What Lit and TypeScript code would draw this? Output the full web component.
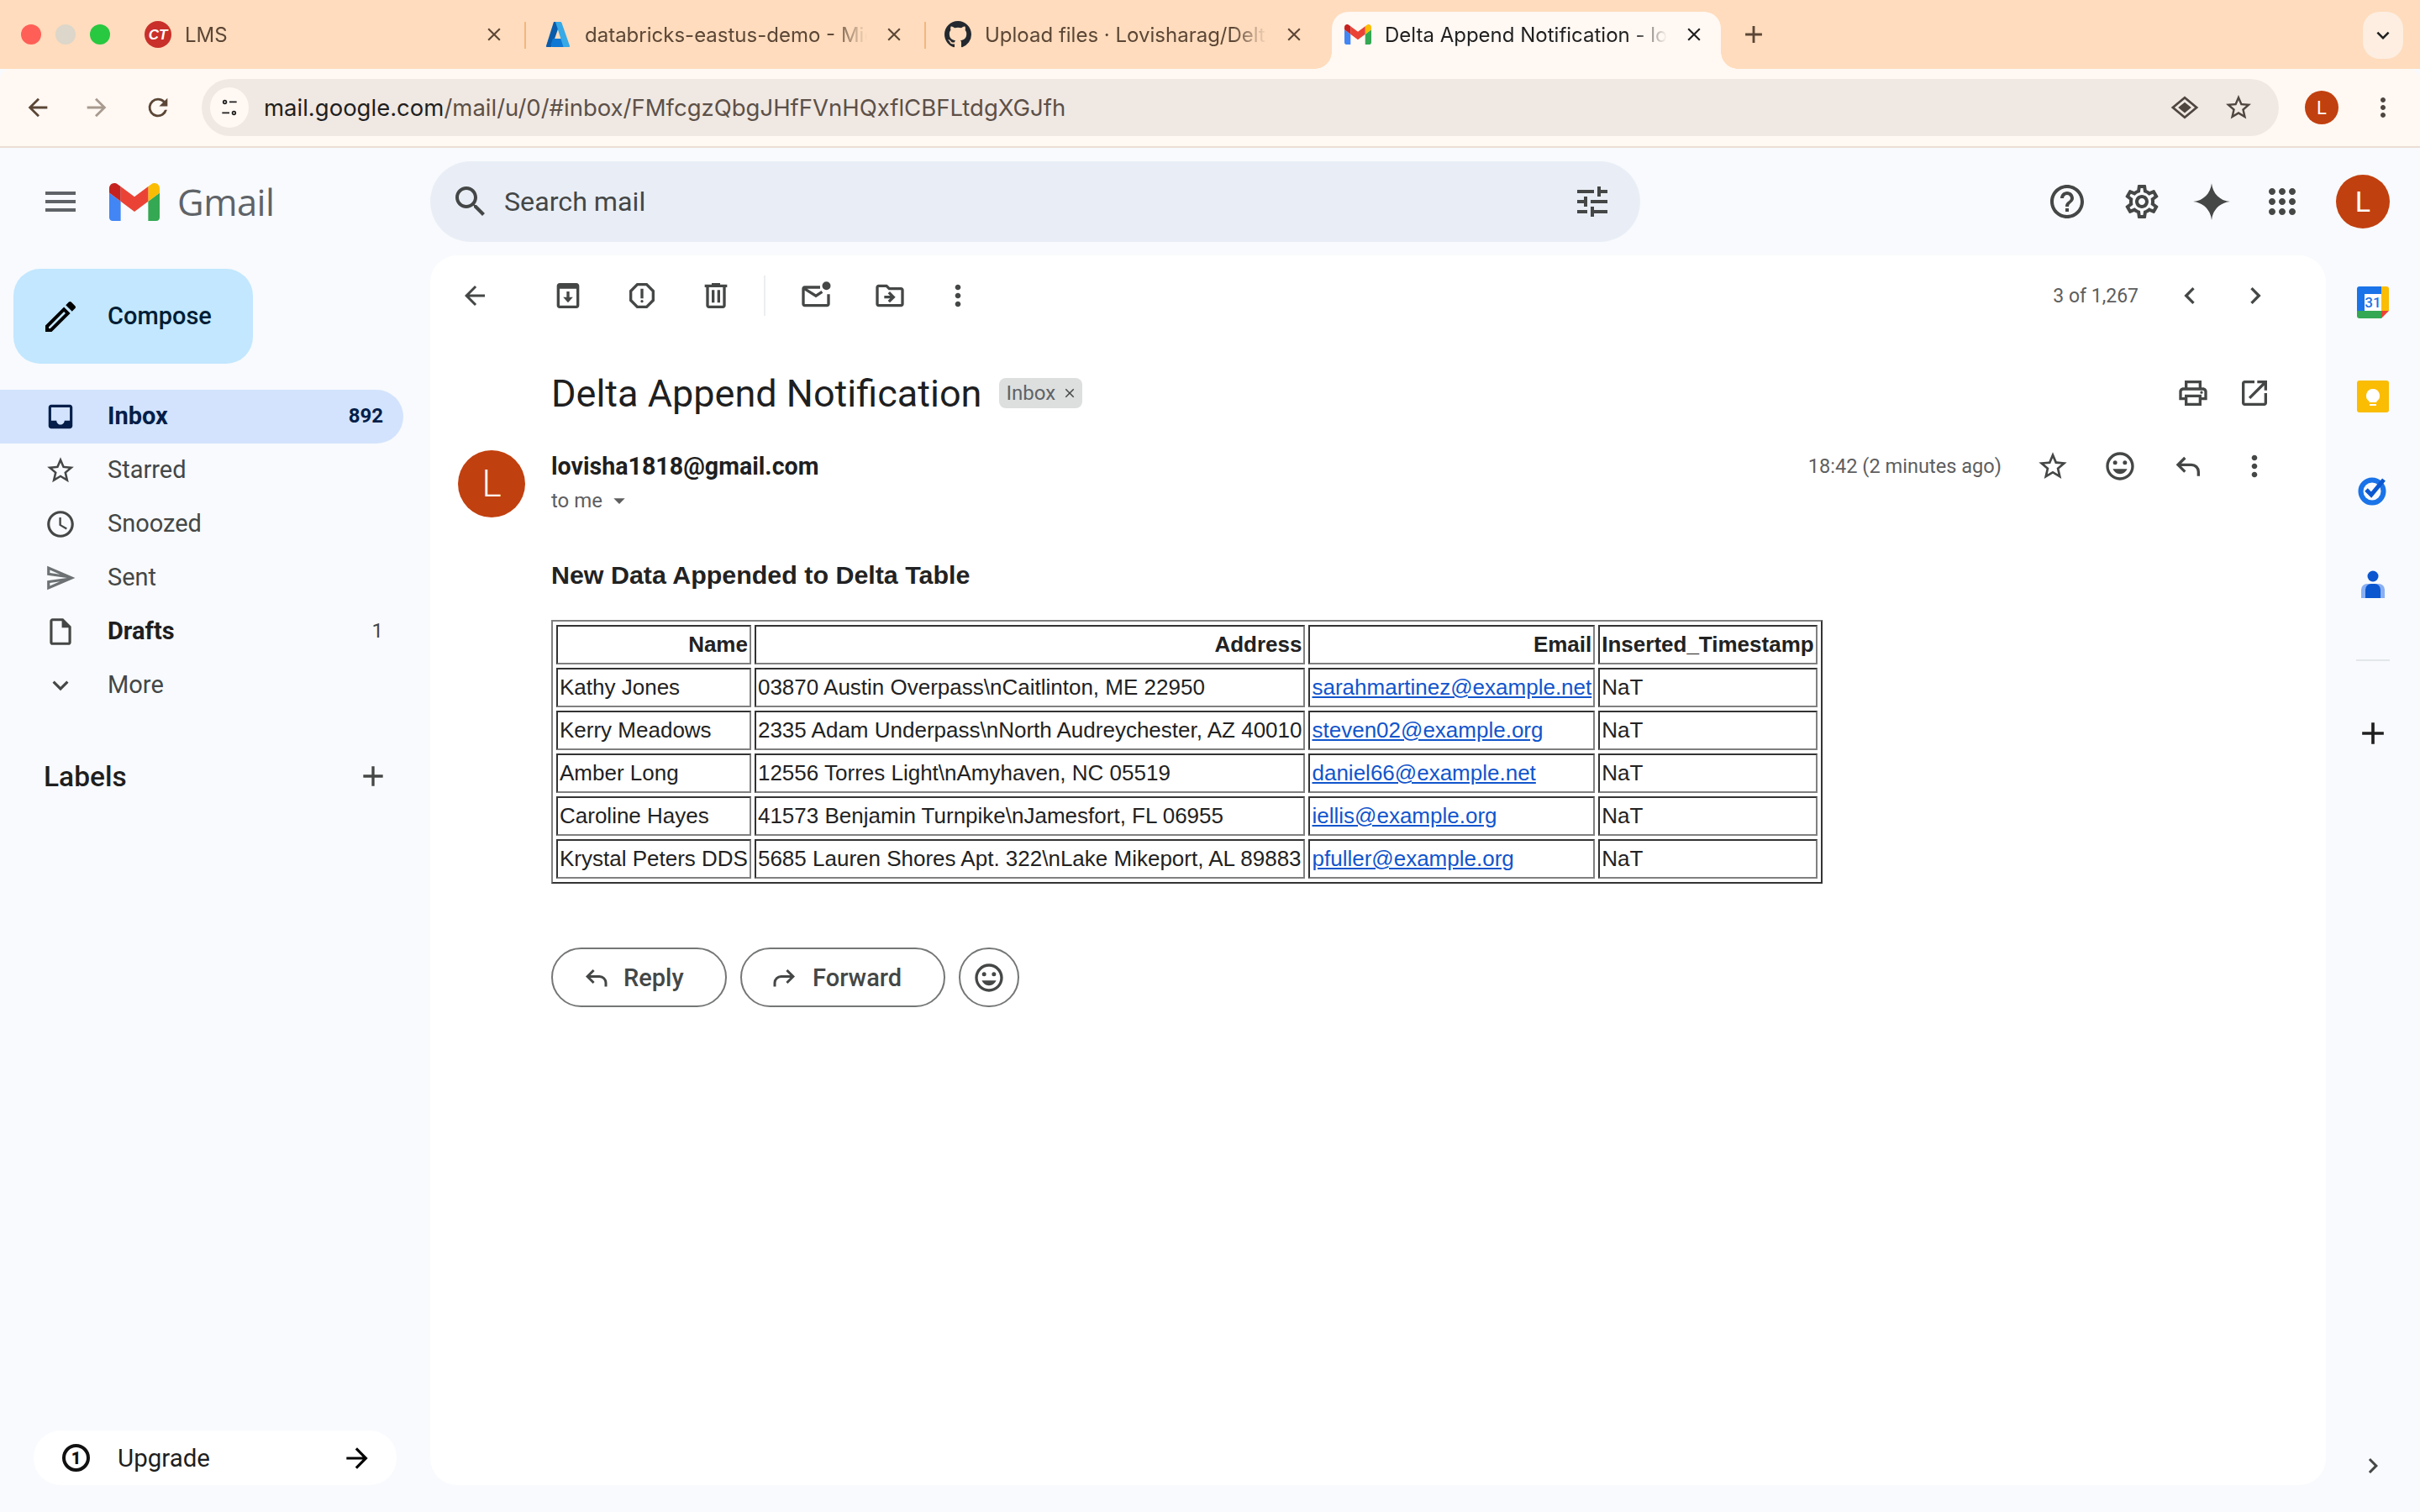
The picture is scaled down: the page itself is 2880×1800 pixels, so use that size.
import { LitElement, html, css, svg } from 'lit';
import { customElement } from 'lit/decorators.js';

const P: Record<string, string> = {
  back: 'M20 11H7.83l5.59-5.59L12 4l-8 8 8 8 1.41-1.41L7.83 13H20v-2z',
  forward: 'M12 4l-1.41 1.41L16.17 11H4v2h12.17l-5.58 5.59L12 20l8-8z',
  reload: 'M17.65 6.35A7.95 7.95 0 0 0 12 4a8 8 0 1 0 7.73 10h-2.08A6 6 0 1 1 12 6c1.66 0 3.14.69 4.22 1.78L13 11h7V4l-2.35 2.35z',
  menu: 'M3 18h18v-2H3v2zm0-5h18v-2H3v2zm0-7v2h18V6H3z',
  search: 'M15.5 14h-.79l-.28-.27C15.41 12.59 16 11.11 16 9.5 16 5.91 13.09 3 9.5 3S3 5.91 3 9.5 5.91 16 9.5 16c1.61 0 3.09-.59 4.23-1.57l.27.28v.79l5 4.99L20.49 19l-4.99-5zm-6 0C7.01 14 5 11.99 5 9.5S7.01 5 9.5 5 14 7.01 14 9.5 11.99 14 9.5 14z',
  tune: 'M3 17v2h6v-2H3zM3 5v2h10V5H3zm10 16v-2h8v-2h-8v-2h-2v6h2zM7 9v2H3v2h4v2h2V9H7zm14 4v-2H11v2h10zm-6-4h2V7h4V5h-4V3h-2v6z',
  help: 'M11 18h2v-2h-2v2zm1-16C6.48 2 2 6.48 2 12s4.48 10 10 10 10-4.48 10-10S17.52 2 12 2zm0 18c-4.41 0-8-3.59-8-8s3.59-8 8-8 8 3.59 8 8-3.59 8-8 8zm0-14c-2.21 0-4 1.79-4 4h2c0-1.1.9-2 2-2s2 .9 2 2c0 2-3 1.75-3 5h2c0-2.25 3-2.5 3-5 0-2.21-1.79-4-4-4z',
  settings: 'M19.43 12.98c.04-.32.07-.64.07-.98 0-.34-.03-.66-.07-.98l2.11-1.65c.19-.15.24-.42.12-.64l-2-3.46c-.09-.16-.26-.25-.44-.25-.06 0-.12.01-.17.03l-2.49 1c-.52-.4-1.08-.73-1.69-.98l-.38-2.65C14.46 2.18 14.25 2 14 2h-4c-.25 0-.46.18-.49.42l-.38 2.65c-.61.25-1.17.59-1.69.98l-2.49-1c-.06-.02-.12-.03-.18-.03-.17 0-.34.09-.43.25l-2 3.46c-.13.22-.07.49.12.64l2.11 1.65c-.04.32-.07.65-.07.98 0 .33.03.66.07.98l-2.11 1.65c-.19.15-.24.42-.12.64l2 3.46c.09.16.26.25.44.25.06 0 .12-.01.17-.03l2.49-1c.52.4 1.08.73 1.69.98l.38 2.65c.03.24.24.42.49.42h4c.25 0 .46-.18.49-.42l.38-2.65c.61-.25 1.17-.59 1.69-.98l2.49 1c.06.02.12.03.18.03.17 0 .34-.09.43-.25l2-3.46c.12-.22.07-.49-.12-.64l-2.11-1.65zm-1.98-1.71c.04.31.05.52.05.73 0 .21-.02.43-.05.73l-.14 1.13.89.7 1.08.84-.7 1.21-1.27-.51-1.04-.42-.9.68c-.43.32-.84.56-1.25.73l-1.06.43-.16 1.13-.2 1.35h-1.4l-.19-1.35-.16-1.13-1.06-.43c-.43-.18-.83-.41-1.23-.71l-.91-.7-1.06.43-1.27.51-.7-1.21 1.08-.84.89-.7-.14-1.13c-.03-.31-.05-.54-.05-.74s.02-.43.05-.73l.14-1.13-.89-.7-1.08-.84.7-1.21 1.27.51 1.04.42.9-.68c.43-.32.84-.56 1.25-.73l1.06-.43.16-1.13.2-1.35h1.39l.19 1.35.16 1.13 1.06.43c.43.18.83.41 1.23.71l.91.7 1.06-.43 1.27-.51.7 1.21-1.07.85-.89.7.14 1.13zM12 8c-2.21 0-4 1.79-4 4s1.79 4 4 4 4-1.79 4-4-1.79-4-4-4zm0 6c-1.1 0-2-.9-2-2s.9-2 2-2 2 .9 2 2-.9 2-2 2z',
  spark: 'M12 1.5C12.6 7.3 16.7 11.4 22.5 12 16.7 12.6 12.6 16.7 12 22.5 11.4 16.7 7.3 12.6 1.5 12 7.3 11.4 11.4 7.3 12 1.5z',
  apps: 'M6 8c1.1 0 2-.9 2-2s-.9-2-2-2-2 .9-2 2 .9 2 2 2zM12 20c1.1 0 2-.9 2-2s-.9-2-2-2-2 .9-2 2 .9 2 2 2zM6 20c1.1 0 2-.9 2-2s-.9-2-2-2-2 .9-2 2 .9 2 2 2zM6 14c1.1 0 2-.9 2-2s-.9-2-2-2-2 .9-2 2 .9 2 2 2zM12 14c1.1 0 2-.9 2-2s-.9-2-2-2-2 .9-2 2 .9 2 2 2zM16 6c0 1.1.9 2 2 2s2-.9 2-2-.9-2-2-2-2 .9-2 2zM12 8c1.1 0 2-.9 2-2s-.9-2-2-2-2 .9-2 2 .9 2 2 2zM18 14c1.1 0 2-.9 2-2s-.9-2-2-2-2 .9-2 2 .9 2 2 2zM18 20c1.1 0 2-.9 2-2s-.9-2-2-2-2 .9-2 2 .9 2 2 2z',
  star: 'M22 9.24l-7.19-.62L12 2 9.19 8.63 2 9.24l5.46 4.73L5.82 21 12 17.27 18.18 21l-1.63-7.03L22 9.24zM12 15.4l-3.76 2.27 1-4.28-3.32-2.88 4.38-.38L12 6.1l1.71 4.04 4.38.38-3.32 2.88 1 4.28L12 15.4z',
  clock: 'M11.99 2C6.47 2 2 6.48 2 12s4.47 10 9.99 10C17.52 22 22 17.52 22 12S17.52 2 11.99 2zM12 20c-4.42 0-8-3.58-8-8s3.58-8 8-8 8 3.58 8 8-3.58 8-8 8zm.5-13H11v6l5.25 3.15.75-1.23-4.5-2.67z',
  sent: 'M4.01 6.03l7.51 3.22-7.52-1 .01-2.22m7.5 8.72L4 17.97v-2.22l7.51-1M2.01 3L2 10l15 2-15 2 .01 7L23 12 2.01 3z',
  draft: 'M14 2H6c-1.1 0-1.99.9-1.99 2L4 20c0 1.1.89 2 1.99 2H18c1.1 0 2-.9 2-2V8l-6-6zM6 20V4h7v5h5v11H6z',
  expand: 'M16.59 8.59L12 13.17 7.41 8.59 6 10l6 6 6-6z',
  add: 'M19 13h-6v6h-2v-6H5v-2h6V5h2v6h6v2z',
  inbox: 'M19 3H5c-1.1 0-2 .9-2 2v14c0 1.1.9 2 2 2h14c1.1 0 2-.9 2-2V5c0-1.1-.9-2-2-2zm0 12h-4c0 1.66-1.35 3-3 3s-3-1.34-3-3H5V5h14v10z',
  edit: 'M3 17.25V21h3.75L17.81 9.94l-3.75-3.75L3 17.25zM5.92 19H5v-.92l9.06-9.06.92.92L5.92 19zM20.71 5.63l-2.34-2.34c-.39-.39-1.02-.39-1.41 0l-1.83 1.83 3.75 3.75 1.83-1.83c.39-.39.39-1.02 0-1.41z',
  more: 'M12 8c1.1 0 2-.9 2-2s-.9-2-2-2-2 .9-2 2 .9 2 2 2zm0 2c-1.1 0-2 .9-2 2s.9 2 2 2 2-.9 2-2-.9-2-2-2zm0 6c-1.1 0-2 .9-2 2s.9 2 2 2 2-.9 2-2-.9-2-2-2z',
  archive: 'M18 3H6c-1.1 0-2 .9-2 2v14c0 1.1.9 2 2 2h12c1.1 0 2-.9 2-2V5c0-1.1-.9-2-2-2zm0 16H6V7h12v12zM13 9h-2v4H8.5l3.5 4 3.5-4H13z',
  report: 'M15.73 3H8.27L3 8.27v7.46L8.27 21h7.46L21 15.73V8.27L15.73 3zM19 14.9L14.9 19H9.1L5 14.9V9.1L9.1 5h5.8L19 9.1v5.8zM12 17a1 1 0 1 0 0-2 1 1 0 0 0 0 2zM11 7h2v7h-2z',
  trash: 'M15 4V3H9v1H4v2h1v13c0 1.1.9 2 2 2h10c1.1 0 2-.9 2-2V6h1V4h-5zm2 15H7V6h10v13zM9 8h2v9H9zm4 0h2v9h-2z',
  unread: 'M4 5h11v2H5.7L12 11l3.9-2.6 1.1 1.7L12 13.4 4 8.3V18h16v-7h2v7c0 1.1-.9 2-2 2H4c-1.1 0-2-.9-2-2V7c0-1.1.9-2 2-2zM19.5 2a3 3 0 1 1 0 6 3 3 0 0 1 0-6z',
  move: 'M20 6h-8l-2-2H4c-1.1 0-1.99.9-1.99 2L2 18c0 1.1.9 2 2 2h16c1.1 0 2-.9 2-2V8c0-1.1-.9-2-2-2zm0 12H4V6h5.17l2 2H20v10zM12.16 12H8v2h4.16l-1.59 1.59L12 17l4-4-4-4-1.41 1.41z',
  left: 'M15.41 7.41L14 6l-6 6 6 6 1.41-1.41L10.83 12z',
  right: 'M10 6L8.59 7.41 13.17 12l-4.58 4.59L10 18l6-6z',
  print: 'M19 8h-1V3H6v5H5c-1.66 0-3 1.34-3 3v6h4v4h12v-4h4v-6c0-1.66-1.34-3-3-3zM8 5h8v3H8V5zm8 14H8v-4h8v4zm2-4v-2H6v2H4v-4c0-.55.45-1 1-1h14c.55 0 1 .45 1 1v4h-2zM18 10.5a1 1 0 1 0 0 2 1 1 0 0 0 0-2z',
  open: 'M19 19H5V5h7V3H5c-1.11 0-2 .9-2 2v14c0 1.1.89 2 2 2h14c1.1 0 2-.9 2-2v-7h-2v7zM14 3v2h3.59l-9.83 9.83 1.41 1.41L19 6.41V10h2V3h-7z',
  emoji: 'M11.99 2C6.47 2 2 6.48 2 12s4.47 10 9.99 10C17.52 22 22 17.52 22 12S17.52 2 11.99 2zM12 20c-4.42 0-8-3.58-8-8s3.58-8 8-8 8 3.58 8 8-3.58 8-8 8zM15.5 8a1.5 1.5 0 1 0 0 3 1.5 1.5 0 0 0 0-3zM8.5 8a1.5 1.5 0 1 0 0 3 1.5 1.5 0 0 0 0-3zM12 17.5c2.33 0 4.31-1.46 5.11-3.5H6.89c.8 2.04 2.78 3.5 5.11 3.5z',
  reply: 'M9.7 5.3l1.4 1.4L7.8 10H15a6 6 0 0 1 6 6v3h-2v-3a4 4 0 0 0-4-4H7.8l3.3 3.3-1.4 1.4L4 11z',
  fwd: 'M14.3 5.3l-1.4 1.4 3.3 3.3H9a6 6 0 0 0-6 6v3h2v-3a4 4 0 0 1 4-4h7.2l-3.3 3.3 1.4 1.4L20 11z',
  drop: 'M7 10l5 5 5-5z',
  close: 'M6.4 5L12 10.6 17.6 5 19 6.4 13.4 12l5.6 5.6-1.4 1.4-5.6-5.6L6.4 19 5 17.6 10.6 12 5 6.4z',
  site: 'M7 3.5a2.5 2.5 0 1 1 0 5 2.5 2.5 0 0 1 0-5zm0 1.6a.9.9 0 1 0 0 1.8.9.9 0 0 0 0-1.8zM12 5h8v1.8h-8zM17 15.5a2.5 2.5 0 1 1 0 5 2.5 2.5 0 0 1 0-5zm0 1.6a.9.9 0 1 0 0 1.8.9.9 0 0 0 0-1.8zM4 17h8v1.8H4z',
  lens: 'M12 2.5L23.5 12 12 21.5.5 12zM12 5L3.5 12 12 19 20.5 12zM12 7.5L6.5 12 12 16.5 17.5 12z',
};

const icon = (name: string, size: number, color = '#444746') => html`
  <svg width=${size} height=${size} viewBox="0 0 24 24" fill=${color}>${svg`<path d=${P[name]} />`}</svg>
`;

const gmailMark = (w: number, h: number) => html`
  <svg width=${w} height=${h} viewBox="52 42 88 66">
    <path fill="#4285f4" d="M58 108h14V74L52 59v43c0 3.32 2.69 6 6 6" />
    <path fill="#34a853" d="M120 108h14c3.32 0 6-2.69 6-6V59l-20 15" />
    <path fill="#fbbc04" d="M120 48v26l20-15v-8c0-7.42-8.47-11.65-14.4-7.2" />
    <path fill="#ea4335" d="M72 74V48l24 18 24-18v26L96 92" />
    <path fill="#c5221f" d="M52 51v8l20 15V48l-5.6-4.2c-5.94-4.45-14.4-.22-14.4 7.2" />
  </svg>
`;

const ltmsIcon = html`
  <svg width="32" height="32" viewBox="0 0 32 32">
    <circle cx="16" cy="16" r="16" fill="#c9302a" />
    <text x="16" y="22" text-anchor="middle" font-family="Liberation Sans" font-size="17" font-weight="700" font-style="italic" fill="#fff">CT</text>
  </svg>
`;

const azureIcon = html`
  <svg width="32" height="32" viewBox="0 0 32 32">
    <path fill="#0a5cab" d="M11 1h8L9 30a1.5 1.5 0 0 1-1.4 1H3a1 1 0 0 1-1-1.4z" />
    <path fill="#0f78d4" d="M22 21H10l-2.5 7L9 31h17z" />
    <path fill="#37a9e6" d="M19 1h-8l2 .1L22.5 31h6.5a1 1 0 0 0 1-1.4L20.4 2a1.5 1.5 0 0 0-1.4-1z" />
  </svg>
`;

const githubIcon = html`
  <svg width="32" height="32" viewBox="0 0 16 16" fill="#24292f">
    <path d="M8 0C3.58 0 0 3.58 0 8c0 3.54 2.29 6.53 5.47 7.59.4.07.55-.17.55-.38 0-.19-.01-.82-.01-1.49-2.01.37-2.53-.49-2.69-.94-.09-.23-.48-.94-.82-1.13-.28-.15-.68-.52-.01-.53.63-.01 1.08.58 1.23.82.72 1.21 1.87.87 2.33.66.07-.52.28-.87.51-1.07-1.78-.2-3.64-.89-3.64-3.95 0-.87.31-1.59.82-2.15-.08-.2-.36-1.02.08-2.12 0 0 .67-.21 2.2.82.64-.18 1.32-.27 2-.27.68 0 1.36.09 2 .27 1.53-1.04 2.2-.82 2.2-.82.44 1.1.16 1.92.08 2.12.51.56.82 1.27.82 2.15 0 3.07-1.87 3.75-3.65 3.95.29.25.54.73.54 1.48 0 1.07-.01 1.93-.01 2.2 0 .21.15.46.55.38A8.013 8.013 0 0016 8c0-4.42-3.58-8-8-8z" />
  </svg>
`;

const calendarIcon = html`
  <svg width="38" height="38" viewBox="0 0 38 38">
    <path fill="#fff" d="M9 9h20v20H9z" />
    <path fill="#1a73e8" d="M3 0h26v9H9v20H0V3a3 3 0 0 1 3-3z" />
    <path fill="#fbbc04" d="M29 0h6a3 3 0 0 1 3 3v26h-9z" />
    <path fill="#34a853" d="M0 29h29v9H3a3 3 0 0 1-3-3z" />
    <path fill="#ea4335" d="M29 29h9l-9 9z" />
    <text x="19" y="25" text-anchor="middle" font-family="Roboto" font-size="17" font-weight="500" fill="#1a73e8">31</text>
  </svg>
`;

const keepIcon = html`
  <svg width="38" height="38" viewBox="0 0 38 38">
    <rect width="38" height="38" rx="3" fill="#fbbc04" />
    <path fill="#fff" d="M19 10a8 8 0 0 0-4.4 14.7V26h8.8v-1.3A8 8 0 0 0 19 10zM15 28h8v2h-8z" />
  </svg>
`;

const tasksIcon = html`
  <svg width="36" height="36" viewBox="0 0 36 36">
    <circle cx="17" cy="19" r="13.5" fill="none" stroke="#1a73e8" stroke-width="6" />
    <path fill="none" stroke="#0b57d0" stroke-width="5" d="M10 17l6 6 L31 5" />
  </svg>
`;

const contactsIcon = html`
  <svg width="30" height="34" viewBox="0 0 30 34">
    <circle cx="15" cy="7" r="6.5" fill="#0b57d0" />
    <path fill="#8ab0f3" d="M8 16h14a7 7 0 0 1 7 7v10H1V23a7 7 0 0 1 7-7z" />
    <path fill="#0b57d0" d="M13 16h4a7 7 0 0 1 7 7v10H6V23a7 7 0 0 1 7-7z" />
  </svg>
`;

const tabs = [
  { title: 'LMS', favicon: ltmsIcon, active: false, sep: false },
  { title: 'databricks-eastus-demo - Microsoft Azure', favicon: azureIcon, active: false, sep: true },
  { title: 'Upload files · Lovisharag/Delta-Append', favicon: githubIcon, active: false, sep: true },
  { title: 'Delta Append Notification - lovisha1818', favicon: gmailMark(32, 24), active: true, sep: false },
];

const nav = [
  { name: 'inbox', label: 'Inbox', count: '892', cls: 'row active' },
  { name: 'star', label: 'Starred', count: '', cls: 'row' },
  { name: 'clock', label: 'Snoozed', count: '', cls: 'row' },
  { name: 'sent', label: 'Sent', count: '', cls: 'row' },
  { name: 'draft', label: 'Drafts', count: '1', cls: 'row strong' },
  { name: 'expand', label: 'More', count: '', cls: 'row' },
];

const rows = [
  ['Kathy Jones', '03870 Austin Overpass\\nCaitlinton, ME 22950', 'sarahmartinez@example.net'],
  ['Kerry Meadows', '2335 Adam Underpass\\nNorth Audreychester, AZ 40010', 'steven02@example.org'],
  ['Amber Long', '12556 Torres Light\\nAmyhaven, NC 05519', 'daniel66@example.net'],
  ['Caroline Hayes', '41573 Benjamin Turnpike\\nJamesfort, FL 06955', 'iellis@example.org'],
  ['Krystal Peters DDS', '5685 Lauren Shores Apt. 322\\nLake Mikeport, AL 89883', 'pfuller@example.org'],
];

@customElement('app-root')
export class AppRoot extends LitElement {
  static styles = css`
    :host {
      display: flex;
      flex-direction: column;
      width: 2880px;
      height: 1800px;
      overflow: hidden;
      background: #f8fafd;
      font-family: Roboto, 'Liberation Sans', sans-serif;
      color: #1f1f1f;
    }
    svg { display: block; flex: none; }
    .slot { display: flex; align-items: center; justify-content: center; flex: none; }

    /* browser chrome */
    .strip {
      display: flex;
      align-items: stretch;
      height: 82px;
      background: #fedcbd;
      font-family: Inter, 'Liberation Sans', sans-serif;
      font-size: 24px;
      color: #5b4636;
    }
    .lights { display: flex; align-items: center; gap: 17px; width: 148px; padding-left: 25px; box-sizing: border-box; }
    .light { width: 24px; height: 24px; border-radius: 50%; }
    .light.red { background: #ff5f57; }
    .light.idle { background: #ddd6ca; }
    .light.green { background: #28c840; }
    .tab {
      position: relative;
      display: flex;
      align-items: center;
      width: 476px;
      padding-left: 24px;
      box-sizing: border-box;
      flex: none;
    }
    .tab.sep::before {
      content: '';
      position: absolute;
      left: 0;
      top: 26px;
      height: 32px;
      width: 2px;
      background: #f2b77e;
    }
    .tab.on { color: #1f1f1f; }
    .tab-bg {
      position: absolute;
      inset: 14px 4px 0 9px;
      background: #fff8f3;
      border-radius: 20px 20px 0 0;
    }
    .flare { position: absolute; bottom: 0; width: 20px; height: 20px; }
    .flare.l { left: -20px; background: radial-gradient(circle at 0 0, transparent 19.5px, #fff8f3 20px); }
    .flare.r { right: -20px; background: radial-gradient(circle at 100% 0, transparent 19.5px, #fff8f3 20px); }
    .fav { position: relative; display: flex; align-items: center; justify-content: center; width: 32px; height: 32px; flex: none; }
    .tab-title {
      position: relative;
      width: 336px;
      margin-left: 16px;
      white-space: nowrap;
      overflow: hidden;
      -webkit-mask-image: linear-gradient(to right, #000 88%, transparent 100%);
      mask-image: linear-gradient(to right, #000 88%, transparent 100%);
    }
    .tab-x { position: relative; width: 32px; margin-left: 16px; }
    .new-tab { width: 40px; margin-left: 15px; }
    .tabs-menu {
      align-self: flex-start;
      width: 48px;
      height: 56px;
      margin: 14px 20px 0 auto;
      background: #fdeee1;
      border-radius: 20px;
    }
    .toolbar {
      display: flex;
      align-items: center;
      height: 94px;
      box-sizing: border-box;
      padding: 0 0 0 10px;
      background: #fff8f3;
      border-bottom: 2px solid #ebdfd5;
      border-radius: 14px 14px 0 0;
    }
    .tool { width: 70px; height: 68px; }
    .tool.reload { margin-left: 3px; }
    .omnibox {
      display: flex;
      align-items: center;
      width: 2472px;
      height: 68px;
      margin-left: 17px;
      padding: 0 28px 0 10px;
      box-sizing: border-box;
      background: #f0e8e3;
      border-radius: 34px;
      font-family: Inter, 'Liberation Sans', sans-serif;
      font-size: 27.5px;
      color: #5c5048;
    }
    .site { width: 46px; height: 48px; background: #fff8f3; border-radius: 50%; margin-right: 18px; }
    .host { color: #1f1f1f; }
    .omni-end { display: flex; align-items: center; gap: 24px; margin-left: auto; }
    .omni-end .slot { width: 40px; }
    .mini-avatar {
      display: flex;
      align-items: center;
      justify-content: center;
      width: 40px;
      height: 40px;
      margin-left: 31px;
      border-radius: 50%;
      background: #c1400f;
      color: #fff;
      font-size: 22px;
      flex: none;
    }
    .chrome-more { width: 40px; margin-left: 33px; }

    /* gmail header */
    .header { display: flex; align-items: center; height: 128px; flex: none; }
    .brand { display: flex; align-items: center; width: 512px; padding-left: 48px; box-sizing: border-box; flex: none; }
    .brand .burger { width: 48px; margin-right: 34px; }
    .wordmark { margin-left: 21px; font-size: 43.5px; color: #5f6368; font-family: 'Open Sans', Roboto, sans-serif; letter-spacing: -0.5px; }
    .search {
      display: flex;
      align-items: center;
      width: 1440px;
      height: 96px;
      background: #e9eef6;
      border-radius: 48px;
      padding: 0 33px 0 24px;
      box-sizing: border-box;
      font-size: 32.2px;
      color: #444746;
      flex: none;
    }
    .search .lens { width: 48px; margin-right: 16px; }
    .search .tune { width: 48px; margin-left: auto; }
    .head-tools { display: flex; align-items: center; margin-left: auto; padding-right: 36px; }
    .head-tools .help { width: 93px; }
    .head-tools .gear { width: 85px; }
    .head-tools .spark { width: 81px; }
    .head-tools .grid { width: 88px; }
    .avatar-lg {
      display: flex;
      align-items: center;
      justify-content: center;
      width: 64px;
      height: 64px;
      margin-left: 20px;
      border-radius: 50%;
      background: #c1400f;
      color: #fff;
      font-size: 34px;
    }

    /* page body */
    .body { display: flex; flex: 1; min-height: 0; padding-bottom: 32px; }
    .side { display: flex; flex-direction: column; width: 512px; flex: none; }
    .compose {
      display: flex;
      align-items: center;
      width: 285px;
      height: 113px;
      margin: 16px 0 31px 16px;
      padding-left: 32px;
      box-sizing: border-box;
      background: #c2e7ff;
      border-radius: 32px;
      font-size: 29px;
      font-weight: 500;
      color: #001d35;
    }
    .compose span { margin: -2px 0 0 32px; }
    .row {
      display: flex;
      align-items: center;
      width: 480px;
      height: 64px;
      padding: 0 24px 0 48px;
      box-sizing: border-box;
      font-size: 29px;
      color: #444746;
      border-radius: 0 32px 32px 0;
    }
    .row span { margin-top: -2px; }
    .row .slot { width: 48px; margin-right: 32px; }
    .row .count { margin-left: auto; font-size: 24px; }
    .row.active { background: #d3e3fd; color: #041e49; font-weight: 700; }
    .row.strong { color: #1f1f1f; font-weight: 700; }
    .row.strong .count { font-weight: 400; color: #444746; }
    .labels {
      display: flex;
      align-items: center;
      justify-content: space-between;
      width: 480px;
      height: 64px;
      margin-top: 44px;
      padding: 0 16px 0 52px;
      box-sizing: border-box;
      font-size: 33.5px;
      font-weight: 500;
    }
    .upgrade {
      display: flex;
      align-items: center;
      width: 432px;
      height: 65px;
      margin: auto 0 0 40px;
      padding: 0 28px 0 34px;
      box-sizing: border-box;
      background: #fff;
      border-radius: 32px;
      font-size: 29.5px;
    }
    .circled {
      display: flex;
      align-items: center;
      justify-content: center;
      width: 25px;
      height: 25px;
      border: 4px solid #111;
      border-radius: 50%;
      font-size: 20px;
      font-weight: 900;
      margin-right: 33px;
      flex: none;
      color: #111;
    }
    .upgrade .slot { margin-left: auto; }

    /* message card */
    .card { flex: 1; min-width: 0; background: #fff; border-radius: 32px; }
    .actions { display: flex; align-items: center; height: 96px; padding: 0 45px 0 9px; }
    .actions .slot { width: 88px; height: 88px; }
    .actions .nav-btn { width: 78px; }
    .group { display: flex; align-items: center; margin-left: 23px; }
    .divider { width: 2px; height: 48px; background: #eceff1; margin: 0 16px 0 13px; }
    .actions .overflow { margin-left: -7px; }
    .pager { margin-left: auto; margin-right: 22px; font-size: 23px; color: #5e5e5e; }
    .subject { display: flex; align-items: center; height: 70px; margin-top: 33px; padding: 0 45px 0 144px; }
    .subject h1 { margin: 0; font-size: 45px; font-weight: 400; color: #1f1f1f; }
    .chip {
      display: flex;
      align-items: center;
      gap: 8px;
      height: 36px;
      margin-left: 21px;
      padding: 0 6px 0 8px;
      background: #dddfde;
      border-radius: 8px;
      font-size: 24px;
      color: #5f6368;
    }
    .subject .slot { width: 80px; height: 70px; }
    .subject .first { margin: 0 -7px 0 auto; }
    .sender { display: flex; margin-top: 33px; padding: 0 45px 0 33px; }
    .avatar {
      display: flex;
      align-items: center;
      justify-content: center;
      width: 80px;
      height: 80px;
      margin-right: 31px;
      border-radius: 50%;
      background: #c1400f;
      color: #fff;
      font-size: 44px;
      font-weight: 300;
      flex: none;
    }
    .from { font-size: 28.6px; font-weight: 700; line-height: 38px; }
    .to { display: flex; align-items: center; height: 44px; font-size: 24px; color: #5e5e5e; }
    .to svg { margin-left: 4px; }
    .meta { display: flex; align-items: center; height: 38px; margin-left: auto; font-size: 23.6px; color: #5e5e5e; }
    .meta .time { margin-right: 21px; }
    .meta .slot { width: 80px; height: 38px; }
    .mail { margin-top: 46px; padding-left: 144px; font-family: 'Liberation Sans', Arial, sans-serif; color: #222; }
    .mail h3 { margin: 0 0 34px; font-size: 30.42px; line-height: 40px; font-weight: 700; }
    table {
      border-collapse: separate;
      border-spacing: 4px;
      border-style: solid;
      border-width: 2px;
      border-color: #808080 #333 #333 #808080;
      font-size: 26px;
      line-height: 39px;
    }
    th, td {
      padding: 2px;
      border-style: solid;
      border-width: 2px;
      border-color: #333 #808080 #808080 #333;
      white-space: nowrap;
      font-weight: 400;
      text-align: left;
    }
    th { font-weight: 700; text-align: right; }
    a { color: #1155cc; text-decoration: underline; }
    .replies { display: flex; gap: 16px; margin-top: 76px; font-family: Roboto, sans-serif; }
    .pill {
      display: flex;
      align-items: center;
      height: 71px;
      box-sizing: border-box;
      border: 2px solid #747775;
      border-radius: 36px;
      font-size: 29px;
      font-weight: 500;
      color: #444746;
    }
    .pill svg { margin-right: 15px; }
    .pill.reply { width: 209px; padding-left: 33px; }
    .pill.forward { width: 244px; padding-left: 33px; }
    .pill.react { width: 72px; justify-content: center; }
    .pill.react svg { margin: 0; }

    /* side rail */
    .rail { display: flex; flex-direction: column; align-items: center; width: 112px; flex: none; }
    .rail .slot { width: 112px; height: 112px; }
    .rail-line { width: 40px; height: 2px; margin-top: 33px; background: #e3e6ea; }
    .rail .plus { height: 48px; margin-top: 62px; }
    .rail .end { height: 40px; margin: auto 0 3px; }
  `;

  private renderTab(t: (typeof tabs)[number]) {
    return html`
      <div class="tab ${t.sep ? 'sep' : ''} ${t.active ? 'on' : ''}">
        ${t.active ? html`<div class="tab-bg"><div class="flare l"></div><div class="flare r"></div></div>` : ''}
        <div class="fav">${t.favicon}</div>
        <div class="tab-title">${t.title}</div>
        <div class="slot tab-x">${icon('close', 26, t.active ? '#1f1f1f' : '#5b4636')}</div>
      </div>
    `;
  }

  private renderChrome() {
    return html`
      <div class="strip">
        <div class="lights">
          <div class="light red"></div>
          <div class="light idle"></div>
          <div class="light green"></div>
        </div>
        ${tabs.map((t) => this.renderTab(t))}
        <div class="slot new-tab">${icon('add', 34, '#5b4636')}</div>
        <div class="slot tabs-menu">${icon('expand', 30, '#1f1f1f')}</div>
      </div>
      <div class="toolbar">
        <div class="slot tool">${icon('back', 34, '#5b4636')}</div>
        <div class="slot tool">${icon('forward', 34, '#a89a8e')}</div>
        <div class="slot tool reload">${icon('reload', 34, '#5b4636')}</div>
        <div class="omnibox">
          <div class="slot site">${icon('site', 26, '#1f1f1f')}</div>
          <span><span class="host">mail.google.com</span>/mail/u/0/#inbox/FMfcgzQbgJHfFVnHQxflCBFLtdgXGJfh</span>
          <div class="omni-end">
            <div class="slot">${icon('lens', 34, '#4f4640')}</div>
            <div class="slot">${icon('star', 36, '#4f4640')}</div>
          </div>
        </div>
        <div class="mini-avatar">L</div>
        <div class="slot chrome-more">${icon('more', 36, '#4f4640')}</div>
      </div>
    `;
  }

  private renderHeader() {
    return html`
      <div class="header">
        <div class="brand">
          <div class="slot burger">${icon('menu', 48, '#5f6368')}</div>
          ${gmailMark(60, 45)}
          <span class="wordmark">Gmail</span>
        </div>
        <div class="search">
          <div class="slot lens">${icon('search', 48)}</div>
          <span>Search mail</span>
          <div class="slot tune">${icon('tune', 48)}</div>
        </div>
        <div class="head-tools">
          <div class="slot help">${icon('help', 48)}</div>
          <div class="slot gear">${icon('settings', 48)}</div>
          <div class="slot spark">${icon('spark', 50)}</div>
          <div class="slot grid">${icon('apps', 48)}</div>
          <div class="avatar-lg">L</div>
        </div>
      </div>
    `;
  }

  private renderSide() {
    return html`
      <div class="side">
        <div class="compose">${icon('edit', 48, '#000')}<span>Compose</span></div>
        ${nav.map(
          (n) => html`
            <div class=${n.cls}>
              <div class="slot">${icon(n.name, 38, n.cls.includes('active') ? '#041e49' : n.name === 'sent' ? '#6e7173' : '#444746')}</div>
              <span>${n.label}</span>
              ${n.count ? html`<span class="count">${n.count}</span>` : ''}
            </div>
          `,
        )}
        <div class="labels"><span>Labels</span>${icon('add', 40)}</div>
        <div class="upgrade">
          <div class="circled">1</div>
          <span>Upgrade</span>
          <div class="slot">${icon('forward', 38, '#000')}</div>
        </div>
      </div>
    `;
  }

  private renderCard() {
    return html`
      <div class="card">
        <div class="actions">
          <div class="slot">${icon('back', 36)}</div>
          <div class="group">
            <div class="slot">${icon('archive', 40)}</div>
            <div class="slot">${icon('report', 40)}</div>
            <div class="slot">${icon('trash', 40)}</div>
          </div>
          <div class="divider"></div>
          <div class="slot">${icon('unread', 40)}</div>
          <div class="slot">${icon('move', 40)}</div>
          <div class="slot overflow">${icon('more', 40)}</div>
          <span class="pager">3 of 1,267</span>
          <div class="slot nav-btn">${icon('left', 40)}</div>
          <div class="slot nav-btn">${icon('right', 40)}</div>
        </div>
        <div class="subject">
          <h1>Delta Append Notification</h1>
          <div class="chip"><span>Inbox</span>${icon('close', 18, '#444746')}</div>
          <div class="slot first">${icon('print', 40)}</div>
          <div class="slot">${icon('open', 40)}</div>
        </div>
        <div class="sender">
          <div class="avatar">L</div>
          <div>
            <div class="from">lovisha1818@gmail.com</div>
            <div class="to">to me ${icon('drop', 32, '#5e5e5e')}</div>
          </div>
          <div class="meta">
            <span class="time">18:42 (2 minutes ago)</span>
            <div class="slot">${icon('star', 40)}</div>
            <div class="slot">${icon('emoji', 40)}</div>
            <div class="slot">${icon('reply', 40)}</div>
            <div class="slot">${icon('more', 40)}</div>
          </div>
        </div>
        <div class="mail">
          <h3>New Data Appended to Delta Table</h3>
          <table>
            <thead>
              <tr><th>Name</th><th>Address</th><th>Email</th><th>Inserted_Timestamp</th></tr>
            </thead>
            <tbody>
              ${rows.map(
                (r) => html`<tr><td>${r[0]}</td><td>${r[1]}</td><td><a>${r[2]}</a></td><td>NaT</td></tr>`,
              )}
            </tbody>
          </table>
          <div class="replies">
            <div class="pill reply">${icon('reply', 36)}Reply</div>
            <div class="pill forward">${icon('fwd', 36)}Forward</div>
            <div class="pill react">${icon('emoji', 40)}</div>
          </div>
        </div>
      </div>
    `;
  }

  private renderRail() {
    return html`
      <div class="rail">
        <div class="slot">${calendarIcon}</div>
        <div class="slot">${keepIcon}</div>
        <div class="slot">${tasksIcon}</div>
        <div class="slot">${contactsIcon}</div>
        <div class="rail-line"></div>
        <div class="slot plus">${icon('add', 44, '#1f1f1f')}</div>
        <div class="slot end">${icon('right', 36)}</div>
      </div>
    `;
  }

  render() {
    return html`
      ${this.renderChrome()} ${this.renderHeader()}
      <div class="body">${this.renderSide()} ${this.renderCard()} ${this.renderRail()}</div>
    `;
  }
}
